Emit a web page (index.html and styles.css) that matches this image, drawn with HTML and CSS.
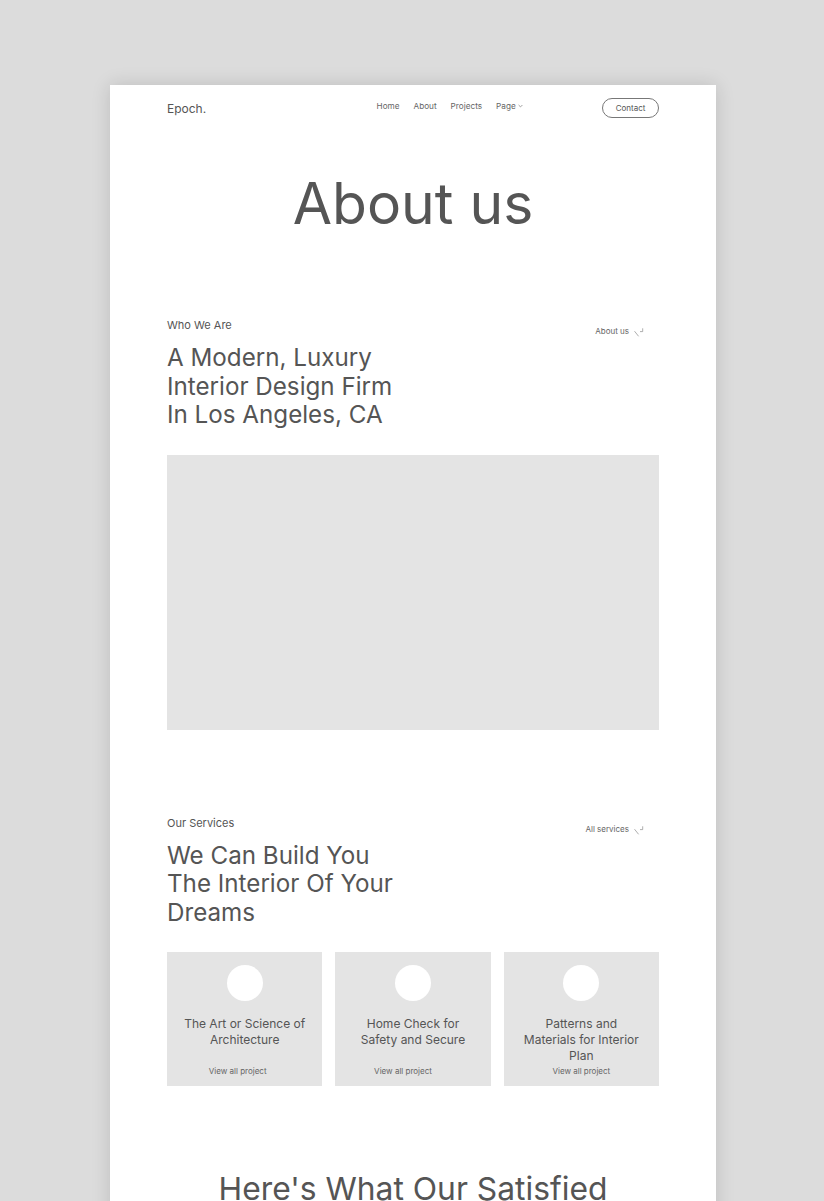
FILE: index.html
```html
<!DOCTYPE html>
<html lang="en">

<head>
    <meta charset="UTF-8">
    <meta name="viewport" content="width=device-width, initial-scale=1.0">
    <title>About us - Epoch.</title>
    <link rel="stylesheet" href="styles.css">
</head>

<body>
    <div class="page">
        <header class="nav">
            <a class="logo" href="#">Epoch.</a>
            <ul class="nav-links">
                <li>Home</li>
                <li>About</li>
                <li>Projects</li>
                <li class="has-drop">Page
                    <svg width="5" height="4" viewBox="0 0 5 4"><path d="M0.6 1 L2.5 2.9 L4.4 1" fill="none" stroke="#777" stroke-width="0.7"/></svg>
                </li>
            </ul>
            <a class="contact-btn" href="#">Contact</a>
        </header>

        <h1 class="page-title">About us</h1>

        <section class="section who">
            <div class="section-head">
                <div>
                    <p class="label">Who We Are</p>
                    <h2 class="heading">A Modern, Luxury<br>Interior Design Firm<br>In Los Angeles, CA</h2>
                </div>
                <a class="more-link" href="#">About us
                    <svg width="10" height="9" viewBox="0 0 10 9"><path d="M8.7 0.3 V3.6 H6" fill="none" stroke="#999" stroke-width="0.8"/><path d="M0.5 3.2 L4.6 8.3" fill="none" stroke="#999" stroke-width="0.8"/></svg>
                </a>
            </div>
            <div class="photo"></div>
        </section>

        <section class="section services">
            <div class="section-head">
                <div>
                    <p class="label">Our Services</p>
                    <h2 class="heading">We Can Build You<br>The Interior Of Your<br>Dreams</h2>
                </div>
                <a class="more-link" href="#">All services
                    <svg width="10" height="9" viewBox="0 0 10 9"><path d="M8.7 0.3 V3.6 H6" fill="none" stroke="#999" stroke-width="0.8"/><path d="M0.5 3.2 L4.6 8.3" fill="none" stroke="#999" stroke-width="0.8"/></svg>
                </a>
            </div>
            <div class="cards">
                <div class="card">
                    <div class="card-icon"></div>
                    <h3 class="card-title">The Art or Science of Architecture</h3>
                    <a class="card-link shift" href="#">View all project</a>
                </div>
                <div class="card">
                    <div class="card-icon"></div>
                    <h3 class="card-title">Home Check for<br>Safety and Secure</h3>
                    <a class="card-link shift-more" href="#">View all project</a>
                </div>
                <div class="card">
                    <div class="card-icon"></div>
                    <h3 class="card-title">Patterns and<br>Materials for Interior<br>Plan</h3>
                    <a class="card-link" href="#">View all project</a>
                </div>
            </div>
        </section>

        <section class="testimonials">
            <h2 class="big-heading">Here's What Our Satisfied<br>Clients Are Saying</h2>
        </section>
    </div>
</body>

</html>
```

FILE: styles.css
```css
* {
    box-sizing: border-box;
}

body {
    margin: 0;
    background-color: #dcdcdc;
    font-family: Inter, "Noto Sans", sans-serif;
    color: #555;
}

a {
    color: inherit;
    text-decoration: none;
}

ul {
    list-style: none;
    padding-left: 0;
    margin: 0;
}

h1, h2, h3, p {
    margin: 0;
    font-weight: 400;
}

.page {
    width: 606px;
    margin: 85px 0 0 calc(50% - 302px);
    padding: 0 57px 80px;
    background-color: #fff;
    box-shadow: 0 0 18px rgba(0, 0, 0, 0.14);
}

/* nav */
.nav {
    display: flex;
    align-items: center;
    padding-top: 13px;
}

.logo {
    font-size: 12px;
    color: #555;
}

.nav-links {
    display: flex;
    gap: 14px;
    margin-left: auto;
    margin-right: 79px;
    margin-bottom: 4px;
    font-size: 8.2px;
    color: #666;
}

.has-drop svg {
    vertical-align: 1px;
}

.contact-btn {
    display: flex;
    align-items: center;
    justify-content: center;
    width: 57px;
    height: 20px;
    border: 1px solid #777;
    border-radius: 10px;
    font-size: 8px;
    color: #555;
}

.page-title {
    margin-top: 57px;
    font-size: 57px;
    line-height: 1;
    text-align: center;
    color: #555;
}

/* sections */
.who {
    margin-top: 86px;
}

.section-head {
    display: flex;
    justify-content: space-between;
    align-items: flex-start;
}

.label {
    font-size: 11px;
    line-height: 14px;
    color: #555;
}

.heading {
    margin-top: 12px;
    font-size: 24.2px;
    line-height: 28.5px;
    white-space: nowrap;
    color: #555;
}

.more-link {
    display: flex;
    align-items: center;
    gap: 5px;
    margin-top: 7px;
    margin-right: 15px;
    font-size: 8px;
    line-height: 10px;
    color: #666;
}

.more-link svg {
    margin-top: 3px;
}

.photo {
    height: 275px;
    margin-top: 25px;
    background-color: #e4e4e4;
}

.services {
    margin-top: 86px;
}

.cards {
    display: grid;
    grid-template-columns: repeat(3, 1fr);
    gap: 13px;
    margin-top: 25px;
}

.card {
    display: flex;
    flex-direction: column;
    align-items: center;
    height: 134px;
    padding: 13px 10px 10px;
    background-color: #e4e4e4;
    text-align: center;
}

.card-icon {
    width: 36px;
    height: 36px;
    border-radius: 50%;
    background-color: #fff;
    flex-shrink: 0;
}

.card-title {
    margin-top: 15px;
    font-size: 12px;
    line-height: 16px;
    color: #555;
}

.card-link {
    margin-top: auto;
    font-size: 8px;
    line-height: 10px;
    color: #666;
}

.card-link.shift {
    margin-right: 14px;
}

.card-link.shift-more {
    margin-right: 20px;
}

.testimonials {
    margin-top: 84px;
}

.big-heading {
    font-size: 31.8px;
    line-height: 38px;
    text-align: center;
    color: #555;
}
```
